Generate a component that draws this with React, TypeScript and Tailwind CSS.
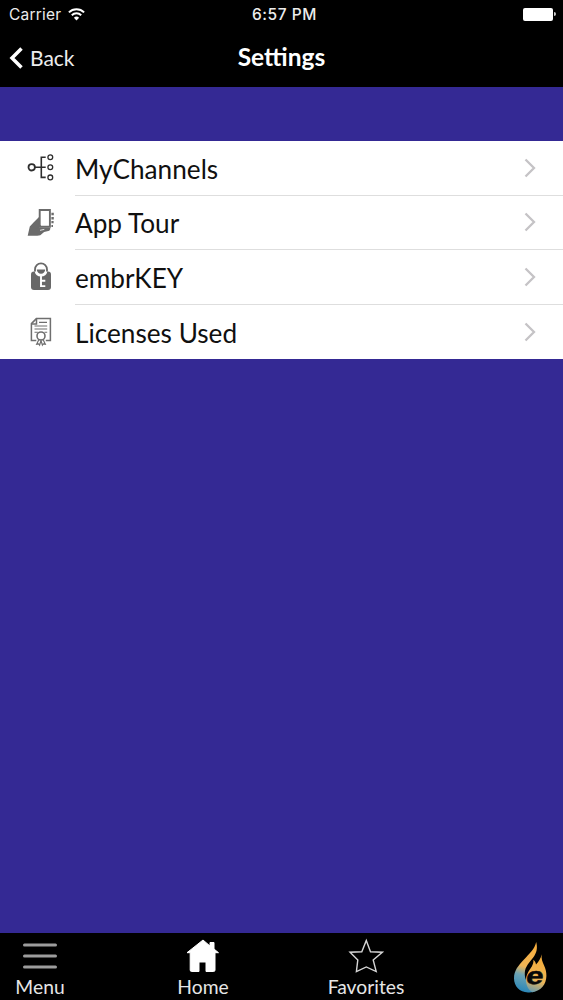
import { ReactNode } from "react"

interface SettingsItem {
    label: string;
    icon: ReactNode;
}

const ChannelsIcon = () => (
    <svg width="28" height="30" viewBox="0 0 28 30" fill="none" stroke="#2e2e2e" strokeWidth="1.6">
        <circle cx="4.7" cy="14.3" r="3.2" strokeWidth="1.8" />
        <path d="M8 14.3h10.7M18.7 4.2h-4.4v20.2h4.4" />
        <circle cx="23.3" cy="4.2" r="2.4" strokeWidth="1.3" />
        <circle cx="23.3" cy="14.3" r="2.4" strokeWidth="1.3" />
        <circle cx="23.3" cy="24.4" r="2.4" strokeWidth="1.3" />
    </svg>
)

const TourIcon = () => (
    <svg width="28" height="30" viewBox="0 0 28 30" fill="#6b6b6b">
        <path d="M.7 27.8L2.8 18.5 7 14 12 9v10.5h10.5l1 1.2-1.2 2-5.2 1.2-3.8 3.4-3 .5Z" />
        <path d="M12.7 2h10.2v16.8H12.7Z" fill="#fff" stroke="#6b6b6b" strokeWidth="1.9" />
        <path d="M8.5 20.5c2.6-.6 3.8-2.6 3.2-5l3.2 3.3" fill="#6b6b6b" />
        <path d="M13 22.3l4.3-.9" stroke="#fff" strokeWidth=".8" />
        <path d="M24.4 4.8h2.4v2.5h-2.4Zm0 4.2h2.4v2.4h-2.4Zm0 4h2.2v2.3h-2.2Zm0 4h1.6v2h-1.6Z" />
    </svg>
)

const KeyIcon = () => (
    <svg width="28" height="30" viewBox="0 0 28 30" fill="none">
        <rect x="4" y="9.5" width="20" height="18.5" rx="3" fill="#686868" />
        <path d="M7.6 9.4h12.8a6.6 6.6 0 0 1-12.8 0Z" fill="#fff" />
        <circle cx="14" cy="7.6" r="6" fill="#fff" />
        <path d="M8 9.5V7.4a6 6 0 0 1 12 0v2.1" stroke="#686868" strokeWidth="1.8" />
        <path d="M9.8 7.5h8.4a4.2 4.2 0 0 1-8.4 0Z" fill="#686868" />
        <path d="M14 13v12M14 18.8h4.3M14 24.1h4.3" stroke="#fff" strokeWidth="1.9" />
    </svg>
)

const LicenseIcon = () => (
    <svg width="28" height="30" viewBox="0 0 28 30" fill="none" stroke="#6f6f6f" strokeWidth="1.5">
        <path d="M9.3 23.4H4.4V6.6l5-5h14v21.8h-4.6" />
        <path d="M4.3 7h5.2V1.8" />
        <path d="M12 5.4h8M7.5 9h12.7M7.5 12h12.7M7.5 15.2h3.3M17.5 15.2h2.7" strokeWidth="1.1" />
        <circle cx="14" cy="19" r="4" fill="#fff" strokeWidth="1.6" />
        <path d="M11.8 22.8l-2.1 4.4 2-.4.9 1.4 1.4-4.6 1.4 4.6.9-1.4 2 .4-2.1-4.4" strokeWidth="1.2" />
    </svg>
)

const WifiIcon = () => (
    <svg width="17" height="13" viewBox="0 0 17 13" fill="none" stroke="#fff" strokeWidth="2">
        <path d="M.9 4.4a10.8 10.8 0 0 1 15.2 0" />
        <path d="M3.8 7.3a6.7 6.7 0 0 1 9.4 0" />
        <path d="M8.5 12.4L5.9 9.8a3.7 3.7 0 0 1 5.2 0Z" fill="#fff" stroke="none" />
    </svg>
)

const FlameLogo = () => (
    <svg width="34" height="52" viewBox="0 0 34 52">
        <defs>
            <linearGradient id="flame" gradientUnits="userSpaceOnUse" x1="24" y1="4" x2="10" y2="52">
                <stop offset="0" stopColor="#f6ad3c" />
                <stop offset="0.48" stopColor="#efb456" />
                <stop offset="0.66" stopColor="#6ba3b4" />
                <stop offset="1" stopColor="#2584b8" />
            </linearGradient>
            <linearGradient id="flameFront" gradientUnits="userSpaceOnUse" x1="28" y1="14" x2="16" y2="51">
                <stop offset="0" stopColor="#f5ab37" />
                <stop offset="0.65" stopColor="#eeb556" />
                <stop offset="1" stopColor="#5f99b4" />
            </linearGradient>
        </defs>
        {/* back tongue, curls under the front one */}
        <path
            d="M23.2 1c1.5 6 .7 10.5-3 15.6-3.6 5-8 8.8-8.4 15.2-.4 6.3 2.5 11.2 8.5 13.2l3 4.3C21.5 51 18.5 51.6 15 51.4 6.5 51 1 45.5 1 37.3c0-7.5 4.2-12.7 10-18.8C16.3 12.8 21.7 8.2 23.2 1Z"
            fill="url(#flame)"
        />
        <path
            d="M28.7 13.2c-.6 4.4.7 7.6 2.4 11.2 1.5 3.3 2.4 6.7 2.3 10.5-.2 8.6-5.2 14.8-14.2 16.3-3.8-2.6-6.2-7-6.2-12 0-6 3.2-9.7 5.8-13.8 1.2-2 1.8-4 1.6-6.6 1.4 1.3 2.3 2.8 2.6 4.6 2.8-2.8 4.8-6.2 5.7-10.2Z"
            fill="url(#flameFront)"
        />
        <text
            x="0"
            y="0"
            transform="translate(12.3 42.6) skewX(-8) scale(1.3 1)"
            fontFamily="'Liberation Sans', sans-serif"
            fontWeight="700"
            fontSize="24"
            fill="#080808"
            stroke="#080808"
            strokeWidth="0.5"
        >
            e
        </text>
    </svg>
)

const items: SettingsItem[] = [
    { label: "MyChannels", icon: <ChannelsIcon /> },
    { label: "App Tour", icon: <TourIcon /> },
    { label: "embrKEY", icon: <KeyIcon /> },
    { label: "Licenses Used", icon: <LicenseIcon /> },
]

const StatusBar = () => (
    <div className="grid h-7 grid-cols-3 items-center pl-[9px] pr-[7px] font-['Inter',sans-serif] text-[15.5px] text-[#ececec]">
        <div className="flex items-center gap-[7px]">
            <span className="pt-0.5 tracking-[0.2px]">Carrier</span>
            <WifiIcon />
        </div>
        <span className="whitespace-nowrap pl-1 pt-0.5 text-center font-medium tracking-[0.55px]">6:57 PM</span>
        <div className="flex items-center justify-end gap-px">
            <div className="h-[13px] w-[30px] rounded-[2px] bg-white" />
            <div className="h-1 w-0.5 rounded-r bg-[#ccc]" />
        </div>
    </div>
)

const NavBar = () => (
    <div className="grid h-[59px] grid-cols-3 items-center px-[9px] text-white">
        <button type="button" className="flex items-center gap-[7px] text-left text-[21px] text-[#ededed]">
            <svg width="14" height="22" viewBox="0 0 14 22" fill="none" stroke="#fff" strokeWidth="3.5">
                <path d="M12.5 1.5L3 11l9.5 9.5" />
            </svg>
            Back
        </button>
        <h1 className="pb-px text-center text-[24.5px] font-bold">Settings</h1>
    </div>
)

const SettingsRow = ({ item, last }: { item: SettingsItem; last: boolean }) => (
    <li className="flex min-h-0 flex-1 pl-[27px]">
        <div className="flex w-12 items-center">{item.icon}</div>
        <div className={`flex flex-1 items-center justify-between pr-[27px] ${last ? "" : "border-b border-[#dedede]"}`}>
            <span className="pt-[3px] text-[26.2px] text-[#101010]">{item.label}</span>
            <svg width="12" height="20" viewBox="0 0 12 20" fill="none" stroke="#c5c3c6" strokeWidth="2.3">
                <path d="M1.5 1.5L10 10l-8.5 8.5" />
            </svg>
        </div>
    </li>
)

const TabBar = () => (
    <nav className="flex h-[67px] bg-black text-[19.3px] text-[#e6e6e6]">
        <div className="flex w-20 flex-col items-center pt-[5px]">
            <svg width="36" height="36" viewBox="0 0 36 36" stroke="#9c9c9c" strokeWidth="3" strokeLinecap="round">
                <path d="M2.5 7h31M2.5 18h31M2.5 29h31" />
            </svg>
            <span className="leading-[26px]">Menu</span>
        </div>
        <div className="ml-[83px] flex w-20 flex-col items-center pt-[5px]">
            <svg width="36" height="36" viewBox="0 0 36 36" fill="#fff" stroke="#fff" strokeLinejoin="round">
                <path d="M18 2L2 14.7h3.2V32q0 1.5 1.5 1.5H14V24h7v9.5h7.5q1.5 0 1.5-1.5V14.7h3.5L29 11V4.5h-4V8Z" />
            </svg>
            <span className="leading-[26px]">Home</span>
        </div>
        <div className="ml-[83px] flex w-20 flex-col items-center pt-[5px]">
            <svg width="36" height="36" viewBox="0 0 36 36" fill="none" stroke="#d6d6d6" strokeWidth="1.4">
                <path d="M18.3 2.5l4.2 11.2 11.8.5-9.1 7.7 3 11.7-9.9-4.7-9.9 4.7 1.4-11.7L2 14.2l11.8-.5Z" />
            </svg>
            <span className="leading-[26px]">Favorites</span>
        </div>
        <div className="flex flex-1 items-center justify-end pr-4">
            <FlameLogo />
        </div>
    </nav>
)

export default function App() {
    return (
        <div className="flex h-[1000px] w-[563px] flex-col overflow-hidden bg-[#342994] font-['Lato',sans-serif]">
            <header className="h-[87px] bg-black">
                <StatusBar />
                <NavBar />
            </header>
            <main className="flex-1 pt-[54px]">
                <ul className="flex h-[218px] flex-col bg-white">
                    {items.map((item, index) => (
                        <SettingsRow key={item.label} item={item} last={index === items.length - 1} />
                    ))}
                </ul>
            </main>
            <TabBar />
        </div>
    )
}
